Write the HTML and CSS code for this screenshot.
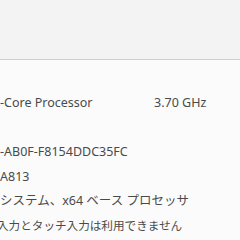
FILE: index.html
```html
<!DOCTYPE html>
<html lang="ja">
<head>
<meta charset="utf-8">
<link rel="stylesheet" href="styles.css">
</head>
<body>
<div class="header"></div>
<div class="content">
  <div class="specs">
    <div class="row"><span class="val">-Core Processor</span><span class="speed">3.70 GHz</span></div>
    <div class="row"><span class="val">&nbsp;</span></div>
    <div class="row"><span class="val">-AB0F-F8154DDC35FC</span></div>
    <div class="row"><span class="val">A813</span></div>
    <div class="row"><span class="val">システム、x64 ベース プロセッサ</span></div>
    <div class="row"><span class="val cut">入力とタッチ入力は利用できません</span></div>
  </div>
</div>
</body>
</html>
```
FILE: styles.css
```css
html, body {
  margin: 0;
  padding: 0;
  width: 240px;
  height: 240px;
  overflow: hidden;
  background: #fbfbfb;
}
body {
  font-family: "Noto Sans", "Noto Sans CJK JP", sans-serif;
  font-size: 12.5px;
  color: #4a4a4a;
}
.header {
  height: 59px;
  background: #f3f3f3;
  border-bottom: 1px solid #cdcdcd;
}
.content {
  padding-top: 31px;
}
.specs {
  display: flex;
  flex-direction: column;
}
.row {
  display: grid;
  grid-template-columns: 154px auto;
  height: 24.6px;
  line-height: 24.6px;
  white-space: nowrap;
}
.cut {
  margin-left: -3px;
  font-size: 11.6px;
}
```
